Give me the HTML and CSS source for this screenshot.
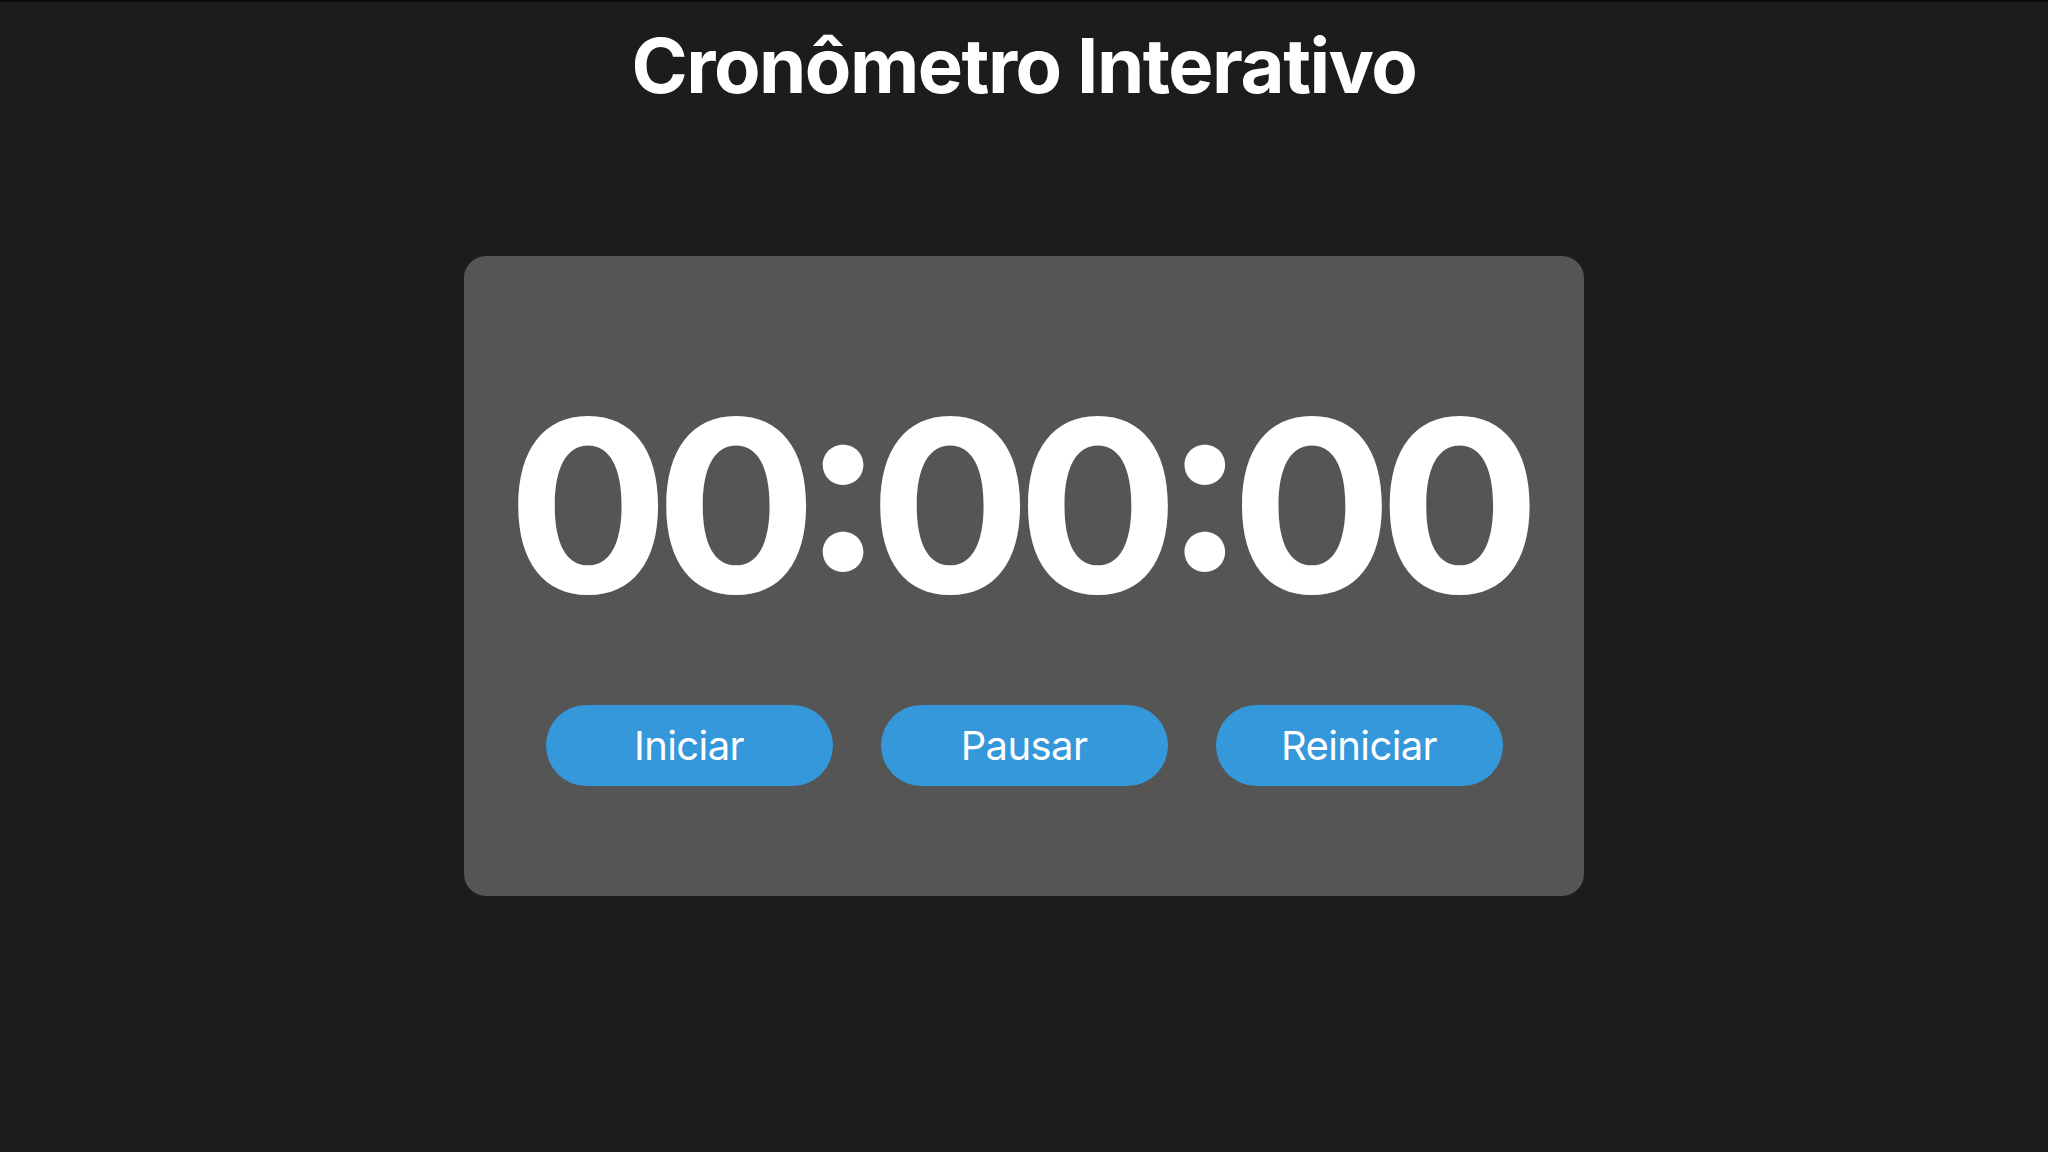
FILE: index.html
```html
<!DOCTYPE html>
<html lang="pt-BR">
<head>
<meta charset="UTF-8">
<title>Cronômetro Interativo</title>
<link rel="stylesheet" href="styles.css">
</head>
<body>
<h1 class="title">Cronômetro Interativo</h1>
<main class="card">
  <div class="timer">00<span class="sep">:</span>00<span class="sep">:</span>00</div>
  <div class="controls">
    <button class="btn">Iniciar</button>
    <button class="btn">Pausar</button>
    <button class="btn">Reiniciar</button>
  </div>
</main>
</body>
</html>
```
FILE: styles.css
```css
html, body {
  margin: 0;
  padding: 0;
  height: 100%;
}
body {
  background: #1c1c1c;
  border-top: 2px solid #0e0e0e;
  box-sizing: border-box;
  font-family: Inter, "Noto Sans", sans-serif;
  color: #ffffff;
  display: flex;
  flex-direction: column;
  align-items: center;
}
.title {
  margin: 25px 0 0;
  font-size: 76px;
  line-height: 1;
  font-weight: 700;
  letter-spacing: -1.5px;
}
.card {
  margin-top: 153px;
  width: 1120px;
  height: 640px;
  box-sizing: border-box;
  background: #555555;
  border-radius: 22px;
  padding-top: 130px;
  display: flex;
  flex-direction: column;
  align-items: center;
}
.timer {
  height: 240px;
  font-size: 240px;
  line-height: 1;
  font-weight: 700;
  letter-spacing: -14px;
  padding-right: 14px;
}
.sep {
  line-height: 0;
  vertical-align: 23px;
}
.controls {
  margin-top: 79px;
  display: flex;
  gap: 48px;
}
.btn {
  width: 287px;
  height: 81px;
  border: none;
  border-radius: 41px;
  background: #3498db;
  color: #ffffff;
  font-family: Inter, "Noto Sans", sans-serif;
  font-size: 40px;
  font-weight: 400;
  letter-spacing: -0.6px;
  padding: 0;
  cursor: pointer;
}
```
